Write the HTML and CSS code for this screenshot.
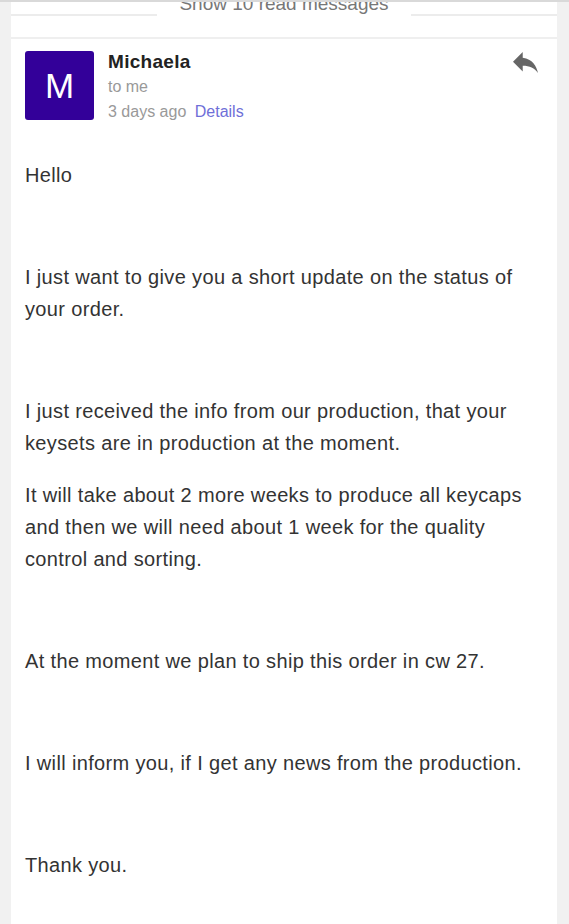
FILE: index.html
```html
<!DOCTYPE html>
<html lang="en">
<head>
<meta charset="utf-8">
<title>Message</title>
<link rel="stylesheet" href="styles.css">
</head>
<body>
<div class="page">
  <div class="thread">
    <div class="read-divider">
      <span class="rule"></span>
      <span class="read-label">Show 10 read messages</span>
      <span class="rule"></span>
    </div>
    <div class="collapsed"></div>
    <article class="message">
      <header class="msg-head">
        <div class="avatar">M</div>
        <div class="meta">
          <div class="sender">Michaela</div>
          <div class="recipient">to me</div>
          <div class="when">3 days ago <a class="details" href="#">Details</a></div>
        </div>
        <button class="reply" type="button" aria-label="Reply">
          <svg viewBox="3 5 18 15" width="25" height="21" aria-hidden="true">
            <path d="M10 9V5l-7 7 7 7v-4.1c5 0 8.5 1.6 11 5.1-1-5-4-10-11-11z" fill="#666"/>
          </svg>
        </button>
      </header>
      <div class="msg-body">
        <p>Hello</p>
        <p>I just want to give you a short update on the status of your order.</p>
        <p class="tight">I just received the info from our production, that your keysets are in production at the moment.</p>
        <p>It will take about 2 more weeks to produce all keycaps and then we will need about 1 week for the quality control and sorting.</p>
        <p>At the moment we plan to ship this order in cw 27.</p>
        <p>I will inform you, if I get any news from the production.</p>
        <p>Thank you.</p>
      </div>
    </article>
  </div>
</div>
</body>
</html>
```

FILE: styles.css
```css
html, body {
  margin: 0;
  padding: 0;
  background: #f1f1f1;
  font-family: "Liberation Sans", Arial, Helvetica, sans-serif;
  color: #333;
}

.page {
  border-top: 2px solid #d9d9d9;
  min-height: 1000px;
}

.thread {
  margin: 0 12px 0 11px;
  background: #fff;
  min-height: 1000px;
}

.read-divider {
  display: flex;
  align-items: flex-end;
  height: 14px;
  overflow: hidden;
}

.rule {
  flex: 1;
  border-bottom: 2px solid #ececec;
}

.read-label {
  font-size: 19px;
  line-height: 20px;
  color: #777;
  padding: 0 22px;
  margin-bottom: 2px;
  white-space: nowrap;
}

.collapsed {
  height: 21px;
  border-bottom: 2px solid #efefef;
}

.msg-head {
  display: flex;
  align-items: flex-start;
  padding: 12px 18px 0 14px;
}

.avatar {
  width: 69px;
  height: 69px;
  border-radius: 3px;
  background: #330099;
  color: #fff;
  font-size: 35px;
  line-height: 69px;
  text-align: center;
  flex: none;
}

.meta {
  flex: 1;
  margin: -2px 0 0 14px;
  line-height: 25px;
}

.sender {
  font-size: 19px;
  font-weight: bold;
  color: #222;
  letter-spacing: 0.3px;
}

.recipient,
.when {
  font-size: 16px;
  color: #999;
}

.details {
  color: #6f6fd8;
  text-decoration: none;
  margin-left: 4px;
}

.reply {
  border: 0;
  background: none;
  padding: 0;
  margin: 1px 1px 0 0;
  cursor: pointer;
  line-height: 0;
}

.msg-body {
  padding: 35px 18px 0 14px;
}

.msg-body p {
  margin: 0 0 70px;
  font-size: 20px;
  line-height: 32px;
  letter-spacing: 0.35px;
}

.msg-body p.tight {
  margin-bottom: 20px;
}
```
